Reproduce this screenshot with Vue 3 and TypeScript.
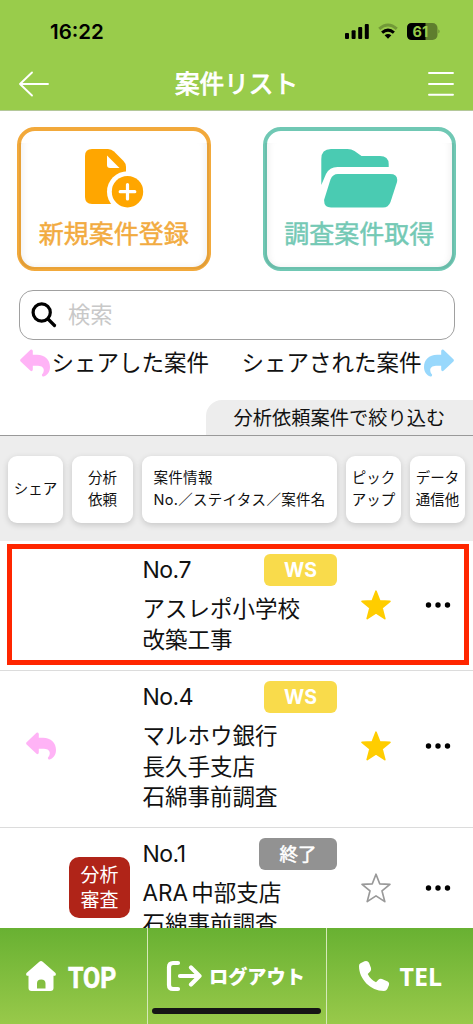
<script setup lang="ts">
interface Project {
  no: string
  status: string
  kind: 'ws' | 'done'
  lines: string[]
  starred: boolean
  shared?: boolean
  review?: string[]
  mark: string
}

const headings = [
  { cls: 'h-share', lines: ['シェア'] },
  { cls: 'h-req', lines: ['分析', '依頼'] },
  { cls: 'h-info', lines: ['案件情報', 'No.／ステイタス／案件名'] },
  { cls: 'h-pick', lines: ['ピック', 'アップ'] },
  { cls: 'h-data', lines: ['データ', '通信他'] },
]

const projects: Project[] = [
  { no: 'No.7', status: 'WS', kind: 'ws', lines: ['アスレポ小学校', '改築工事'], starred: true, mark: 'first' },
  { no: 'No.4', status: 'WS', kind: 'ws', lines: ['マルホウ銀行', '長久手支店', '石綿事前調査'], starred: true, shared: true, mark: 'second' },
  { no: 'No.1', status: '終了', kind: 'done', lines: ['ARA 中部支店', '石綿事前調査'], starred: false, review: ['分析', '審査'], mark: 'third' },
]

const replyPath =
  'M.6 10.2 10.5.8Q12.5-.3 12.8 2V5.8H17C25 5.8 30 11 30 18C30 24 26.5 26.5 23.8 27.4Q21.5 27.6 22 25.6C25 22 24.5 17 18 16.8H12.8V20.5Q12.5 23 10.5 21.8L.6 12.4Q-.4 11.3.6 10.2Z'
const starPath =
  'M15 1.2 18.7 10.8 28.9 11.4 21 17.9 23.8 28.6 15 22.9 6.2 28.6 9 17.9 1.1 11.4 11.3 10.8Z'
</script>

<template>
  <div class="screen">
    <header class="top">
      <div class="status">
        <span class="time">16:22</span>
        <svg class="signals" width="96" height="18" viewBox="0 0 96 18">
          <rect x="0" y="10" width="4" height="6" rx="1" />
          <rect x="6.6" y="7.2" width="4" height="8.8" rx="1" />
          <rect x="13.2" y="4" width="4" height="12" rx="1" />
          <rect x="19.8" y="1" width="4" height="15" rx="1" />
          <g fill="none" stroke="#000">
            <path d="M34.2 5.8Q43-1.8 51.8 5.8" stroke-width="3" opacity=".25" />
            <path d="M37.1 9.6Q43 4.6 48.9 9.6" stroke-width="3" />
          </g>
          <path d="M39.6 12.3Q43 9.8 46.4 12.3L43 15.8Z" />
          <rect x="62" y="0" width="30.5" height="17" rx="5" opacity=".38" />
          <path d="M67 0H80.500V17H67Q62 17 62 12V5Q62 0 67 0Z" />
          <path d="M93.5 6.2Q95.5 8.4 93.5 10.6Z" opacity=".4" />
          <text x="67.5" y="13.6" class="battery">61</text>
        </svg>
      </div>
      <div class="titlebar">
        <svg width="32" height="28" viewBox="0 0 32 28" class="line-icon">
          <path d="M30 14H2M14 2.5 2 14 14 25.5" />
        </svg>
        <h1>案件リスト</h1>
        <svg width="26" height="28" viewBox="0 0 26 28" class="line-icon">
          <path d="M1 3H25M1 14H25M1 24.7H25" />
        </svg>
      </div>
    </header>

    <section class="actions">
      <button class="action orange">
        <svg width="60" height="60" viewBox="84 148 60 60">
          <path d="M92 149H108Q111.500 149 114 151.500L123.500 161Q126 163.500 126 167V204H92Q85 204 85 197V156Q85 149 92 149Z" fill="#ffa600" />
          <path d="M107 155.500V165Q107 168 110 168H119.500Z" fill="#fff" />
          <circle cx="127.500" cy="191.700" r="20.500" fill="#fff" />
          <circle cx="127.500" cy="191.700" r="15.700" fill="#ffa600" />
          <path d="M127.500 184.500V199M120.200 191.700H134.800" stroke="#fff" stroke-width="3.200" stroke-linecap="round" />
        </svg>
        <span>新規案件登録</span>
      </button>
      <button class="action teal">
        <svg width="78" height="60" viewBox="320 148 78 60">
          <path d="M321.300 185V159Q321.300 149 331 149H347.500Q351.500 149 354.500 151L361.500 156H380Q388.500 156 388.700 164V167H337.500Q329.500 167 326 174Z" />
          <path d="M338 174H390Q398.500 174 397 182L390.500 202Q388.500 207.500 383 207.500H331Q323.500 207.500 324.200 199.500L330.500 179.500Q332.500 174 338 174Z" />
        </svg>
        <span>調査案件取得</span>
      </button>
    </section>

    <div class="search">
      <svg width="26" height="26" viewBox="0 0 26 26">
        <circle cx="10.700" cy="10.500" r="8.600" />
        <path d="M17 17 23.500 23.500" stroke-linecap="round" />
      </svg>
      <span>検索</span>
    </div>

    <div class="legend">
      <div>
        <svg class="pink" width="30" height="28" viewBox="0 0 30 28"><path :d="replyPath" /></svg>
        <span>シェアした案件</span>
      </div>
      <div>
        <span>シェアされた案件</span>
        <svg class="blue" width="30" height="28" viewBox="0 0 30 28"><path :d="replyPath" /></svg>
      </div>
    </div>

    <div class="filter">分析依頼案件で絞り込む</div>

    <div class="headings">
      <div v-for="h in headings" :key="h.cls" class="heading" :class="h.cls">
        <span v-for="l in h.lines" :key="l">{{ l }}</span>
      </div>
    </div>

    <main class="list">
      <article v-for="p in projects" :key="p.no" class="row" :class="p.mark">
        <div class="share">
          <svg v-if="p.shared" class="pink" width="30" height="28" viewBox="0 0 30 28"><path :d="replyPath" /></svg>
        </div>
        <div class="request">
          <div v-if="p.review" class="review">
            <span v-for="r in p.review" :key="r">{{ r }}</span>
          </div>
        </div>
        <div class="info">
          <div class="meta">
            <span class="no">{{ p.no }}</span>
            <span class="badge" :class="p.kind">{{ p.status }}</span>
          </div>
          <div v-for="l in p.lines" :key="l" class="name">{{ l }}</div>
        </div>
        <svg class="star" :class="{ on: p.starred }" width="30" height="30" viewBox="0 0 30 30"><path :d="starPath" /></svg>
        <svg class="dots" width="26" height="6" viewBox="0 0 26 6">
          <circle cx="3.500" cy="3" r="2.700" /><circle cx="13" cy="3" r="2.700" /><circle cx="22.500" cy="3" r="2.700" />
        </svg>
      </article>
    </main>

    <footer class="nav">
      <a class="home">
        <svg width="32" height="32" viewBox="0 0 32 32">
          <path fill-rule="evenodd" d="M14.300 1.700Q16 .3 17.700 1.700L30.500 13Q31.500 14.200 30.300 15.700H28.500V28Q28.500 31 25.500 31H6.500Q3.500 31 3.500 28V15.700H1.700Q.5 14.200 1.500 13ZM12 28.500H20.500V23.500Q20.500 19.500 16.200 19.500T12 23.500Z" />
        </svg>
        <span class="en">TOP</span>
      </a>
      <a class="logout">
        <svg width="36" height="32" viewBox="0 0 36 32">
          <path class="stroke" d="M12 3H7Q3 3 3 7V25Q3 29 7 29H12M14 16H33M25 7.500 33.500 16 25 24.500" />
        </svg>
        <span class="ja">ログアウト</span>
        <i class="indicator"></i>
      </a>
      <a class="phone">
        <svg width="32" height="32" viewBox="0 0 32 32">
          <path d="M2.500 3.300 6.500 1.200Q9.700.2 11 2.800L13 8Q13.500 10.300 12.200 11.400L9.700 14Q12.500 19.500 18 22.200L20.700 19.500Q21.900 18.300 24 18.900L29.700 21.400Q31.800 22.600 31 25L29.300 29Q28.200 31 26 31C12.500 31 1 19 1 6Q1 4 2.500 3.300Z" />
        </svg>
        <span class="tel">TEL</span>
      </a>
    </footer>
  </div>
</template>

<style>
body {
  margin: 0;
  background: #fff;
}
</style>

<style scoped>
.screen {
  display: flex;
  flex-direction: column;
  width: 473px;
  height: 1024px;
  overflow: hidden;
  color: #111;
  font-family: Inter, "Noto Sans CJK JP", sans-serif;
  white-space: nowrap;
}
.screen *,
.screen *::before,
.screen *::after {
  box-sizing: border-box;
}
svg {
  display: block;
  flex: none;
}
.top {
  height: 111px;
  flex: none;
  background: #99cc4b;
  border-bottom: 1px solid #b4c89a;
}
.status {
  display: flex;
  justify-content: space-between;
  align-items: center;
  height: 63px;
  padding: 0 32px 0 50px;
}
.time {
  font-size: 20.5px;
  font-weight: 600;
  color: #000;
}
.battery {
  font: 700 14.5px Inter, sans-serif;
  fill: #99cc4b;
}
.titlebar {
  display: flex;
  justify-content: space-between;
  align-items: center;
  height: 42px;
  padding: 0 19px 0 18px;
}
h1 {
  margin: 0 5px 0 0;
  font-size: 24.6px;
  line-height: 36px;
  font-weight: 400;
  -webkit-text-stroke: 0.9px #fff;
  color: #fff;
}
.line-icon {
  fill: none;
  stroke: #fff;
  stroke-width: 1.9px;
  stroke-linecap: round;
  stroke-linejoin: round;
}
.actions {
  display: flex;
  justify-content: space-between;
  flex: none;
  padding: 16px 17px 0;
}
.action {
  position: relative;
  display: flex;
  flex-direction: column;
  align-items: center;
  width: 193.5px;
  height: 144px;
  padding: 16.5px 0 0;
  border: 4.5px solid;
  border-radius: 18px;
  background: #fff;
  font: 400 25px/34px "Noto Sans CJK JP", sans-serif;
}
.action::before {
  content: "";
  position: absolute;
  inset: 12px -2px -2px;
  border-radius: 0 0 14px 14px;
  box-shadow: inset 9px 0 7px -5px rgba(0, 0, 0, 0.06), inset -9px 0 7px -5px rgba(0, 0, 0, 0.06), inset 0 -8px 7px -6px rgba(0, 0, 0, 0.06);
}
.action span {
  margin-top: 7px;
  -webkit-text-stroke: 0.5px currentColor;
}
.orange {
  border-color: #f2a93b;
  color: #f2ab40;
}
.teal {
  border-color: #70c8b4;
  color: #74c9b5;
}
.teal svg {
  fill: #4acbb2;
}
.search {
  display: flex;
  align-items: center;
  flex: none;
  width: 436px;
  height: 50px;
  margin: 18.500px 0 0 19px;
  padding-left: 11px;
  border: 1.500px solid #a0a0a0;
  border-radius: 14px;
  font-size: 22.300px;
  line-height: 32px;
  color: #c8c8c8;
}
.search svg {
  fill: none;
  stroke: #000;
  stroke-width: 3.200px;
}
.search span {
  margin-left: 11px;
}
.legend {
  display: flex;
  justify-content: space-between;
  align-items: center;
  flex: none;
  height: 46px;
  padding: 0 19.500px 0 19.500px;
  font-size: 22.500px;
  line-height: 32px;
}
.legend div {
  display: flex;
  align-items: center;
  gap: 2px;
}
.pink {
  fill: #ffb3f6;
}
.blue {
  fill: #98d8fc;
  transform: scaleX(-1);
}
.filter {
  align-self: flex-end;
  flex: none;
  width: 267px;
  height: 35px;
  margin-top: 14px;
  padding-left: 27.500px;
  border-radius: 16px 0 0 0;
  background: #ededed;
  font-size: 19.250px;
  line-height: 36px;
}
.headings {
  display: flex;
  align-items: flex-start;
  flex: none;
  height: 106px;
  padding: 20px 0 0 8px;
  gap: 9px;
  background: #ededed;
  border-top: 1.500px solid #999;
}
.heading {
  display: flex;
  flex-direction: column;
  align-items: center;
  justify-content: center;
  flex: none;
  width: 55px;
  height: 67px;
  border-radius: 9px;
  background: #fff;
  box-shadow: 0 2px 6px rgba(0, 0, 0, 0.16);
  font-size: 14.500px;
  line-height: 22px;
}
.h-req {
  width: 61px;
}
.h-info {
  width: 195px;
  align-items: flex-start;
  padding-left: 11.500px;
  letter-spacing: 0.300px;
}
.list {
  flex: 1;
  min-height: 0;
  overflow: hidden;
}
.row {
  display: grid;
  grid-template-columns: 69px 61px 194px 79px 44px;
  align-items: center;
  border-bottom: 1px solid #dcdcdc;
}
.share {
  padding-left: 26px;
}
.info {
  align-self: start;
  margin-left: 12.500px;
}
.meta {
  display: flex;
  align-items: center;
  justify-content: space-between;
  width: 194.500px;
  height: 32px;
  margin-bottom: 8px;
}
.no {
  font-size: 23px;
  letter-spacing: -0.500px;
}
.name {
  font-size: 22.500px;
  line-height: 30.500px;
  word-spacing: -3px;
}
.badge {
  display: grid;
  place-items: center;
  width: 73px;
  height: 32px;
  border-radius: 6px;
  background: #f9db4b;
  color: #fff;
  font-size: 19.500px;
  line-height: 30px;
  font-weight: 700;
}
.badge.done {
  width: 78px;
  background: #929292;
  font-size: 18.500px;
  font-weight: 400;
  -webkit-text-stroke: 0.500px #fff;
}
.star {
  justify-self: end;
  margin-right: 12px;
  fill: none;
  stroke: #999;
  stroke-width: 1.700px;
  stroke-linejoin: round;
}
.star.on {
  fill: #ffcd00;
  stroke: #ffcd00;
}
.dots {
  margin-left: 22px;
  fill: #000;
}
.first {
  height: 130px;
  padding: 0 0 1px;
  position: relative;
}
.first .info {
  margin-top: 13.500px;
}
.first::after {
  content: "";
  position: absolute;
  left: 7px;
  top: 3px;
  width: 462px;
  height: 121px;
  border: 5px solid #ff2600;
}
.second {
  height: 157px;
  padding-bottom: 5px;
}
.second .info,
.third .info {
  margin-top: 10.500px;
}
.third {
  height: 121px;
}
.review {
  display: flex;
  flex-direction: column;
  align-items: center;
  justify-content: center;
  width: 61px;
  height: 61px;
  border-radius: 10px;
  background: #b02418;
  color: #fff;
  font-size: 19px;
  line-height: 25px;
}
.nav {
  display: grid;
  grid-template-columns: 146.500px 179.500px 1fr;
  flex: none;
  height: 96px;
  position: relative;
  background: linear-gradient(#68b132, #98c94a);
  color: #fff;
}
.nav a {
  position: relative;
  display: flex;
  align-items: center;
  height: 96px;
}
.nav a + a {
  border-left: 1.500px solid #d5e8b9;
}
.nav svg {
  fill: #fff;
}
.nav .stroke {
  fill: none;
  stroke: #fff;
  stroke-width: 4.200px;
  stroke-linecap: round;
  stroke-linejoin: round;
}
.home {
  padding-left: 25px;
}
.en {
  margin: 3px 0 0 11px;
  font: 700 29px/34px Roboto, sans-serif;
  -webkit-text-stroke: 0.600px #fff;
  transform: scaleX(0.860);
  transform-origin: left;
}
.logout {
  padding-left: 18px;
}
.ja {
  margin-left: 7.500px;
  font: 900 19.200px/28px "Noto Sans CJK JP", sans-serif;
}
.indicator {
  position: absolute;
  left: 4.500px;
  bottom: 10px;
  width: 169px;
  height: 6px;
  border-radius: 3px;
  background: #151515;
}
.phone {
  padding-left: 30.500px;
}
.tel {
  margin-left: 10px;
  font: 700 25px/34px "Noto Sans", sans-serif;
}
</style>
